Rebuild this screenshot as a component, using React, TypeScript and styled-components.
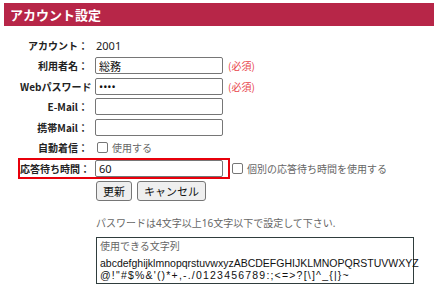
import styled, { createGlobalStyle } from 'styled-components';

const GlobalStyle = createGlobalStyle`
  body {
    margin: 0;
    background: #fff;
    font-family: "Noto Sans", "Noto Sans CJK JP", sans-serif;
    color: #222;
  }
`;

const ScPage = styled.div`
  padding: 3px 0 0 4px;
`;

const ScHeader = styled.h1`
  margin: 0;
  height: 23px;
  padding-left: 6px;
  background: #b72648;
  color: #fff;
  font-family: "Noto Sans CJK JP", sans-serif;
  font-size: 13px;
  font-weight: 700;
  line-height: 23px;
`;

const ScForm = styled.div`
  display: flex;
  flex-direction: column;
  padding: 8.75px 0 0 14px;
`;

const ScLine = styled.div`
  display: flex;
  align-items: center;
  gap: 2px;
  height: 20.5px;
`;

const ScFieldBox = styled.div<{ $highlight?: boolean }>`
  display: flex;
  align-items: center;
  gap: 3px;
  box-sizing: border-box;
  height: ${p => (p.$highlight ? '21px' : '20.5px')};
  padding-right: ${p => (p.$highlight ? '5px' : '0')};
  border: 2px solid ${p => (p.$highlight ? '#e8000b' : 'transparent')};
`;

const ScLabel = styled.div`
  width: 72px;
  padding-right: 4px;
  box-sizing: border-box;
  text-align: right;
  font-family: "Noto Sans CJK JP", sans-serif;
  font-size: 10px;
  font-weight: 700;
  color: #222;
  white-space: nowrap;
`;

const ScValue = styled.span`
  font-size: 11px;
  padding-left: 1px;
`;

const ScInput = styled.input`
  box-sizing: border-box;
  width: 128px;
  height: 17px;
  margin: 0;
  padding: 0 3px;
  border: 1px solid #767676;
  border-radius: 2px;
  font-family: "Noto Sans", "Noto Sans CJK JP", sans-serif;
  font-size: 11px;
  color: #111;
  background: #fff;
`;

const ScRequired = styled.span`
  font-family: "Noto Sans CJK JP", sans-serif;
  font-size: 10px;
  color: #e8444a;
  margin-left: 1px;
`;

const ScCheckLabel = styled.label<{ $indent?: number }>`
  display: flex;
  align-items: center;
  gap: 4px;
  margin-left: ${p => p.$indent ?? 0}px;
  font-family: "Noto Sans CJK JP", sans-serif;
  font-size: 10px;
  color: #666;
`;

const ScCheck = styled.input.attrs({ type: 'checkbox' })`
  appearance: none;
  box-sizing: border-box;
  width: 11px;
  height: 11px;
  margin: 0;
  border: 1px solid #767676;
  border-radius: 2px;
  background: #fff;
`;

const ScButtons = styled.div`
  display: flex;
  gap: 5px;
  margin: 2.5px 0 0 92px;
`;

const ScButton = styled.button`
  height: 20px;
  padding: 0 6px;
  border: 1px solid #767676;
  border-radius: 3px;
  background: #efefef;
  font-family: "Noto Sans CJK JP", sans-serif;
  font-size: 11px;
  color: #111;
`;

const ScNote = styled.p`
  margin: 15px 0 0 92px;
  font-family: "Noto Sans", "Noto Sans CJK JP", sans-serif;
  font-size: 10px;
  line-height: 14px;
  color: #666;
`;

const ScCharBox = styled.div`
  box-sizing: border-box;
  width: 318px;
  height: 47px;
  margin: 7px 0 0 92px;
  padding: 1px 1px 1px 3px;
  border: 1px solid #2f3d3d;
`;

const ScCharTitle = styled.div`
  font-family: "Noto Sans CJK JP", sans-serif;
  font-size: 10px;
  line-height: 14px;
  color: #666;
`;

const ScCharList = styled.div`
  margin-top: 4px;
  font-family: "Liberation Sans", sans-serif;
  font-size: 10.5px;
  line-height: 12px;
  color: #111;
  white-space: nowrap;
`;

const ScSymbols = styled.span`
  letter-spacing: 1.2px;
`;

export default function App() {
  return <ScPage>
    <GlobalStyle />
    <ScHeader>アカウント設定</ScHeader>
    <ScForm>
      <ScLine>
        <ScFieldBox>
          <ScLabel>アカウント：</ScLabel>
          <ScValue>2001</ScValue>
        </ScFieldBox>
      </ScLine>
      <ScLine>
        <ScFieldBox>
          <ScLabel>利用者名：</ScLabel>
          <ScInput defaultValue="総務" />
        </ScFieldBox>
        <ScRequired>(必須)</ScRequired>
      </ScLine>
      <ScLine>
        <ScFieldBox>
          <ScLabel>Webパスワード：</ScLabel>
          <ScInput type="password" defaultValue="1234" />
        </ScFieldBox>
        <ScRequired>(必須)</ScRequired>
      </ScLine>
      <ScLine>
        <ScFieldBox>
          <ScLabel>E-Mail：</ScLabel>
          <ScInput />
        </ScFieldBox>
      </ScLine>
      <ScLine>
        <ScFieldBox>
          <ScLabel>携帯Mail：</ScLabel>
          <ScInput />
        </ScFieldBox>
      </ScLine>
      <ScLine>
        <ScFieldBox>
          <ScLabel>自動着信：</ScLabel>
          <ScCheckLabel $indent={2}><ScCheck />使用する</ScCheckLabel>
        </ScFieldBox>
      </ScLine>
      <ScLine>
        <ScFieldBox $highlight>
          <ScLabel>応答待ち時間：</ScLabel>
          <ScInput defaultValue="60" />
        </ScFieldBox>
        <ScCheckLabel><ScCheck />個別の応答待ち時間を使用する</ScCheckLabel>
      </ScLine>
    </ScForm>
    <ScButtons>
      <ScButton>更新</ScButton>
      <ScButton>キャンセル</ScButton>
    </ScButtons>
    <ScNote>パスワードは4文字以上16文字以下で設定して下さい.</ScNote>
    <ScCharBox>
      <ScCharTitle>使用できる文字列</ScCharTitle>
      <ScCharList>
        abcdefghijklmnopqrstuvwxyzABCDEFGHIJKLMNOPQRSTUVWXYZ<br />
        <ScSymbols>@!"#$%&amp;'()*+,-./0123456789:;&lt;=&gt;?[\]^_{'{'}|{'}'}~</ScSymbols>
      </ScCharList>
    </ScCharBox>
  </ScPage>;
}
